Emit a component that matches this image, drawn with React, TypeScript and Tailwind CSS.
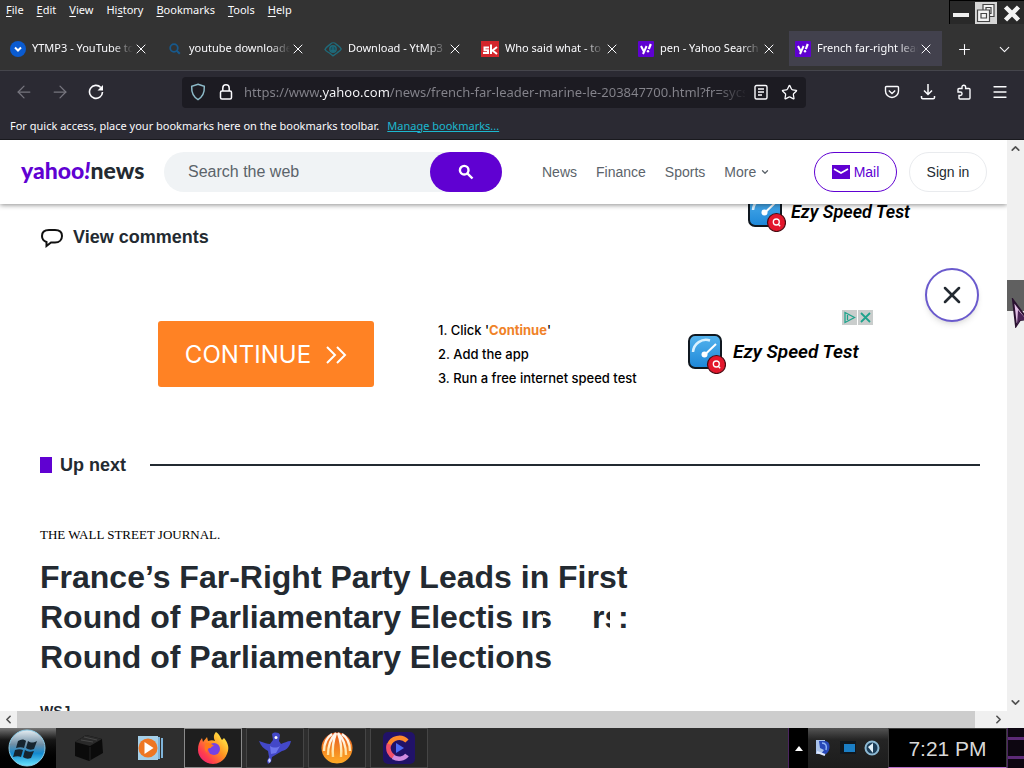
import React from "react";
import {
  ArrowLeft,
  ArrowRight,
  ChevronDown,
  ChevronLeft,
  ChevronRight,
  ChevronUp,
  Menu,
  Plus,
  Star,
  X,
} from "lucide-react";

const menus = [
  { before: "", key: "F", after: "ile" },
  { before: "", key: "E", after: "dit" },
  { before: "", key: "V", after: "iew" },
  { before: "Hi", key: "s", after: "tory" },
  { before: "", key: "B", after: "ookmarks" },
  { before: "", key: "T", after: "ools" },
  { before: "", key: "H", after: "elp" },
];

const YtIcon = () => (
  <svg viewBox="0 0 16 16" className="size-4 shrink-0">
    <circle cx="8" cy="8" r="8" fill="#0a5bd0" />
    <path d="M5 6.5l3 3 3-3" fill="none" stroke="#fff" strokeWidth="2" />
  </svg>
);

const GlassIcon = () => (
  <svg viewBox="0 0 16 16" className="size-4 shrink-0">
    <circle cx="7" cy="7" r="3.8" fill="none" stroke="#17598c" strokeWidth="1.8" />
    <path d="M9.8 9.8l3 3" stroke="#17598c" strokeWidth="2" />
  </svg>
);

const CloudIcon = () => (
  <svg viewBox="0 0 18 16" className="h-4 w-[18px] shrink-0" fill="none" stroke="#1f6a7a" strokeWidth="1.4">
    <path d="M1 8.500C3 5 5.500 4 6.500 3c1.500-1.500 4-1.500 5.500 0 1.500 1.500 4 2.500 5.200 5-1 2-2.700 2.500-4.200 4l-4 2.800L5.500 12C4 11 2 10.500 1 8.500z" />
    <circle cx="9" cy="8" r="3.200" fill="#1a4f5c" />
    <path d="M9 5.500v5M7.200 9L9 10.800 10.800 9" />
  </svg>
);

const SkIcon = () => (
  <svg viewBox="0 0 18 16" className="h-4 w-[18px] shrink-0">
    <rect width="18" height="16" fill="#d3262b" />
    <path
      d="M8 6.500H3.500v2.800H7V12H2M10 3.500V13M16 6l-4.500 3.500L16 13"
      fill="none"
      stroke="#fff"
      strokeWidth="2"
    />
  </svg>
);

const YahooIcon = () => (
  <svg viewBox="0 0 16 16" className="size-4 shrink-0">
    <rect width="16" height="16" rx="1" fill="#5f01d1" />
    <path d="M3 5l2.600 5M8.600 5L5 13" stroke="#fff" strokeWidth="2" fill="none" />
    <path d="M12.800 3l-2 5.200" stroke="#fff" strokeWidth="2.200" />
    <circle cx="10" cy="10.200" r="1.200" fill="#fff" />
  </svg>
);

const tabs = [
  { title: "YTMP3 - YouTube to", icon: YtIcon },
  { title: "youtube downloader", icon: GlassIcon },
  { title: "Download - YtMp3", icon: CloudIcon },
  { title: "Who said what - to wh", icon: SkIcon },
  { title: "pen - Yahoo Search", icon: YahooIcon },
  { title: "French far-right lead", icon: YahooIcon, active: true },
];

const Tab: React.FC<{
  title: string;
  icon: React.ElementType;
  active?: boolean;
}> = ({ title, icon: Icon, active }) => (
  <div
    className={`flex h-[35px] min-w-0 flex-1 items-center pr-2 pl-[6px] ${
      active ? "bg-[#42414d]" : ""
    }`}
  >
    <Icon />
    <span className="ml-[6px] min-w-0 flex-1 overflow-hidden mask-r-from-80% text-[11px] whitespace-nowrap">
      {title}
    </span>
    <button aria-label={`Close ${title}`} className="shrink-0">
      <X size={16} strokeWidth={1.5} />
    </button>
  </div>
);

const ToolButton: React.FC<{
  label: string;
  children: React.ReactNode;
}> = ({ label, children }) => (
  <button
    aria-label={label}
    className="flex h-8 w-9 shrink-0 items-center justify-center"
  >
    {children}
  </button>
);

const BrowserChrome = () => (
  <header className="shrink-0 bg-[#333333] font-['Noto_Sans',sans-serif] text-[#fbfbfe]">
    <div className="flex h-7 items-start justify-between">
      <nav className="flex gap-[13px] pl-[6px]">
        {menus.map((m) => (
          <button key={m.key + m.after} className="text-[11px] leading-5">
            {m.before}
            <u className="underline-offset-2">{m.key}</u>
            {m.after}
          </button>
        ))}
      </nav>
      <div className="flex h-6 w-[75px] items-center justify-between border-t border-l border-black bg-[#292929] px-[3px]">
        <button aria-label="Minimize">
          <svg viewBox="0 0 16 22" className="h-[22px] w-4">
            <path d="M0 13h16" stroke="#f0f0f0" strokeWidth="4" />
          </svg>
        </button>
        <button aria-label="Restore" className="bg-[#d5d5d5]">
          <svg viewBox="0 0 22 22" className="size-[22px]" fill="#f2f2f2" stroke="#444" strokeWidth="1.200">
            <path d="M8 2.500h11v12H8z" />
            <path d="M11 5.500h5v6h-5z" />
            <path d="M2.500 8h12v11.500h-12z" />
            <path d="M6 11.500h5.500V16H6z" />
          </svg>
        </button>
        <button aria-label="Close window">
          <svg viewBox="0 0 18 18" className="size-[18px]">
            <path d="M2.500 3l13 13M15.500 3l-13 13" stroke="#f4f4f4" strokeWidth="4.500" />
          </svg>
        </button>
      </div>
    </div>

    <div className="flex h-[43px] items-start border-b border-[#45454c] pt-[3px] pl-1">
      <div className="flex min-w-0 flex-1 gap-1">
        {tabs.map((tab) => (
          <Tab key={tab.title} {...tab} />
        ))}
      </div>
      <div className="flex gap-1 pt-[2px] pr-[2px] pl-1">
        <ToolButton label="New tab">
          <Plus size={17} strokeWidth={1.5} />
        </ToolButton>
        <ToolButton label="List all tabs">
          <ChevronDown size={17} strokeWidth={1.5} />
        </ToolButton>
      </div>
    </div>

    <div className="flex h-[42px] items-center bg-[#2b2a33] px-[6px]">
      <div className="flex text-[#77767f]">
        <ToolButton label="Back">
          <ArrowLeft size={20} strokeWidth={1.5} />
        </ToolButton>
        <ToolButton label="Forward">
          <ArrowRight size={20} strokeWidth={1.5} />
        </ToolButton>
      </div>
      <ToolButton label="Reload">
        <svg viewBox="0 0 16 16" className="size-4" fill="none" stroke="#fbfbfe" strokeWidth="1.600">
          <path d="M12.800 3.500A6.500 6.500 0 1 0 14.500 8" />
          <path d="M15 1v5.500H9.500z" fill="#fbfbfe" stroke="none" />
        </svg>
      </ToolButton>
      <div className="mx-[68px] flex h-[31px] min-w-0 flex-1 items-center rounded bg-[#1c1b22] px-2">
        <svg viewBox="0 0 16 18" className="h-[18px] w-4 shrink-0" fill="none" stroke="#8dbbc9" strokeWidth="1.500">
          <path d="M8 1.200l6.300 2.200c.3 5.800-1.500 10.400-6.300 13.200C3.200 13.800 1.400 9.200 1.700 3.400z" />
        </svg>
        <svg viewBox="0 0 14 18" className="ml-[13px] h-[18px] w-[14px] shrink-0" fill="none" stroke="#fbfbfe" strokeWidth="1.500">
          <rect x="1.500" y="8" width="11" height="8" rx="1.500" />
          <path d="M3.800 8V5a3.200 3.200 0 0 1 6.400 0v3" />
        </svg>
        <input
          aria-label="Address"
          readOnly
          value="https://www.yahoo.com/news/french-far-leader-marine-le-203847700.html?fr=sycsrp_catchall"
          className="ml-[11px] h-6 min-w-0 flex-1 bg-[linear-gradient(90deg,#85848c_0_76px,#fbfbfe_76px_145px,#85848c_145px_470px,transparent_504px)] bg-clip-text text-[13px] text-transparent outline-none"
        />
        <div className="flex gap-3 pl-2">
          <button aria-label="Reader view">
            <svg viewBox="0 0 16 16" className="size-4" fill="none" stroke="#fbfbfe" strokeWidth="1.400">
              <rect x="2" y="1.500" width="12" height="13.500" rx="1.500" />
              <path d="M5 5h6M5 8h6M5 11h4" />
            </svg>
          </button>
          <button aria-label="Bookmark this page">
            <Star size={17} strokeWidth={1.8} />
          </button>
        </div>
      </div>
      <ToolButton label="Save to Pocket">
        <svg viewBox="0 0 16 16" className="size-4" fill="none" stroke="#fbfbfe" strokeWidth="1.400">
          <path d="M2.500 2.500h11c.7 0 1 .4 1 1V7a6.500 6.500 0 0 1-13 0V3.500c0-.6.3-1 1-1z" />
          <path d="M4.800 6.500L8 9.500l3.200-3" />
        </svg>
      </ToolButton>
      <ToolButton label="Downloads">
        <svg viewBox="0 0 16 16" className="size-4" fill="none" stroke="#fbfbfe" strokeWidth="1.500">
          <path d="M8 0v10.500M4 6.500l4 4 4-4M1.500 12v1.500c0 .8.5 1.200 1.200 1.200h10.600c.7 0 1.200-.4 1.200-1.200V12" />
        </svg>
      </ToolButton>
      <ToolButton label="Extensions">
        <svg viewBox="0 0 16 16" className="size-4" fill="none" stroke="#fbfbfe" strokeWidth="1.400">
          <path d="M6 4.500V3a1.800 1.800 0 0 1 3.600 0v1.500H13c.6 0 1 .4 1 1V14c0 .6-.4 1-1 1H4c-.6 0-1-.4-1-1v-2.500h1.300a1.700 1.700 0 0 0 0-3.500H2V5.500c0-.6.400-1 1-1z" />
        </svg>
      </ToolButton>
      <ToolButton label="Open menu">
        <Menu size={18} strokeWidth={1.700} />
      </ToolButton>
    </div>

    <div className="flex h-[27px] items-center gap-2 border-b border-[#19191e] bg-[#2b2a33] px-[10px] text-[11px]">
      <span>
        For quick access, place your bookmarks here on the bookmarks toolbar.
      </span>
      <a href="#bookmarks" className="text-[#1cb8cf] underline">
        Manage bookmarks...
      </a>
    </div>
  </header>
);

const SiteHeader = () => (
  <div className="relative z-10 flex h-16 items-center bg-white pr-5 pl-[21px] text-sm text-[#5b636a] shadow-[0_1px_5px_rgba(0,0,0,0.45)]">
    <a
      href="#home"
      className="w-[143px] pb-1 font-['Lato',sans-serif] text-[23px] leading-8 font-black whitespace-nowrap text-[#232a31]"
    >
      <span className="text-[#6001d2]">
        yahoo<i>!</i>
      </span>
      news
    </a>
    <form className="flex h-10 w-[338px] rounded-full bg-[#f0f3f5]">
      <input
        aria-label="Search the web"
        placeholder="Search the web"
        className="min-w-0 flex-1 pl-6 text-base outline-none placeholder:text-[#5b636a]"
      />
      <button
        type="button"
        aria-label="Search"
        className="flex w-[72px] items-center justify-center rounded-full bg-[#6001d2]"
      >
        <svg viewBox="0 0 16 16" className="size-4" fill="none" stroke="#fff" strokeWidth="2.400">
          <circle cx="6.200" cy="6.200" r="4.300" />
          <path d="M9.300 9.300l5.200 5.200" />
        </svg>
      </button>
    </form>
    <nav className="ml-10 flex flex-1 gap-[19px]">
      <a href="#news">News</a>
      <a href="#finance">Finance</a>
      <a href="#sports">Sports</a>
      <a href="#more" className="flex items-center gap-1">
        More
        <ChevronDown size={10} strokeWidth={3} />
      </a>
    </nav>
    <button className="flex h-10 w-[83px] items-center justify-center gap-1 rounded-full border border-[#6001d2] text-[#6001d2]">
      <svg viewBox="0 0 18 14" className="h-[14px] w-[18px]">
        <rect width="18" height="14" fill="#6001d2" />
        <path d="M2 4l7 4 7-4" fill="none" stroke="#fff" strokeWidth="1.800" />
      </svg>
      Mail
    </button>
    <button className="ml-3 h-10 w-[78px] rounded-full border border-[#e9ebee] text-[#232a31]">
      Sign in
    </button>
  </div>
);

const SpeedIcon = () => (
  <svg viewBox="0 0 38 40" className="h-10 w-[38px] shrink-0">
    <defs>
      <linearGradient id="dial" x1="0" y1="0" x2="0" y2="1">
        <stop offset="0" stopColor="#55b4ee" />
        <stop offset="1" stopColor="#1d87d8" />
      </linearGradient>
    </defs>
    <rect x="1" y="1" width="32" height="33" rx="6" fill="url(#dial)" stroke="#101820" strokeWidth="2" />
    <path d="M5 18A13 13 0 0 1 22 6.500" fill="none" stroke="#d9f1ff" strokeWidth="2.500" />
    <path d="M17 20.500L28 10" stroke="#fff" strokeWidth="2" />
    <circle cx="16.500" cy="20.500" r="3" fill="#fff" />
    <circle cx="28.500" cy="30.500" r="9" fill="#e3172c" stroke="#4a0d14" strokeWidth="1.200" />
    <circle cx="28.300" cy="30" r="3" fill="none" stroke="#fff" strokeWidth="1.300" />
    <path d="M30 32l2.200 2.200" stroke="#fff" strokeWidth="1.300" />
  </svg>
);

const WebPage = () => (
  <main className="relative min-w-0 flex-1 overflow-hidden bg-white font-['Liberation_Sans',Arial,sans-serif] text-[#232a31]">
    <SiteHeader />
    <div className="pr-[27px] pl-10">
      <div className="flex items-start justify-between">
        <a href="#comments" className="mt-5 flex items-center gap-[9px] text-lg leading-[26px] font-bold">
          <svg viewBox="0 0 24 22" className="h-[22px] w-6" fill="none" stroke="#111" strokeWidth="2">
            <path d="M9 4h6c4.500 0 7 2.500 7 6s-2.500 6.500-7 6.500h-4L6.500 20v-4C3.500 15 2 13 2 10c0-3.500 2.500-6 7-6z" />
          </svg>
          View comments
        </a>
        <div className="-mt-3 mr-[70px] flex gap-[5px] font-['Roboto',sans-serif] text-lg leading-10 font-semibold text-black italic">
          <SpeedIcon />
          Ezy Speed Test
        </div>
      </div>

      <section className="mt-[60px] ml-[118px] flex items-start">
        <button className="mt-[11px] flex h-[66px] w-[216px] items-center justify-center gap-[14px] rounded-[3px] bg-[#ff8224] pt-[2px] font-['Inter',sans-serif] text-2xl text-white">
          CONTINUE
          <svg viewBox="0 0 22 18" className="h-[18px] w-[22px]" fill="none" stroke="#fff" strokeWidth="2">
            <path d="M2 1l8 8-8 8M12 1l8 8-8 8" />
          </svg>
        </button>
        <ol className="mt-2 ml-16 w-[250px] font-['Inter',sans-serif] text-[13px] leading-6 font-medium text-black">
          <li>
            1. Click '<b className="font-bold text-[#f08228]">Continue</b>'
          </li>
          <li>2. Add the app</li>
          <li>3. Run a free internet speed test</li>
        </ol>
        <div className="w-[185px]">
          <div className="flex justify-end gap-px">
            <button aria-label="Ad choices" className="bg-[#c9cdcc]">
              <svg viewBox="0 0 15 15" className="size-[15px]" fill="none" stroke="#1fa38c" strokeWidth="1.300">
                <path d="M3 2.500l9.500 5-9.500 5zM5.500 5v5" />
              </svg>
            </button>
            <button aria-label="Hide ad" className="bg-[#c9cdcc]">
              <svg viewBox="0 0 15 15" className="size-[15px]" stroke="#1fa38c" strokeWidth="1.800">
                <path d="M3 3l9 9M12 3l-9 9" />
              </svg>
            </button>
          </div>
          <div className="mt-[9px] flex gap-[7px] font-['Roboto',sans-serif] text-[19px] leading-9 font-semibold whitespace-nowrap text-black italic">
            <SpeedIcon />
            Ezy Speed Test
          </div>
        </div>
      </section>

      <div className="mt-[61px] flex items-center">
        <span className="h-4 w-3 bg-[#6001d2]" />
        <h2 className="ml-2 text-lg leading-7 font-bold">Up next</h2>
        <hr className="ml-6 flex-1 border-t-2 border-[#232a31]" />
      </div>

      <div className="mt-11 font-['Liberation_Serif',serif] text-[13px] leading-6 text-black">
        THE WALL STREET JOURNAL.
      </div>
      <div className="mt-[10px] text-[32px] leading-10 font-bold whitespace-nowrap">
        <h1>France’s Far-Right Party Leads in First</h1>
        {/* half-repainted line: only slices of the old text are left */}
        <div className="flex items-end">
          <span>Round of Parliamentary Electis</span>
          <span className="mb-2 ml-2 flex h-5 w-[22px] items-end overflow-hidden">
            <span className="-mb-2">in</span>
          </span>
          <span className="mb-2 flex h-5 w-[9px] items-end justify-end overflow-hidden">
            <span className="-mb-2">s</span>
          </span>
          <span className="mb-2 ml-10 flex h-5 w-[18px] items-end overflow-hidden">
            <span className="-mb-2">rs</span>
          </span>
          <span className="mb-2 ml-2 flex h-5 items-end overflow-hidden">
            <span className="-mb-2">:</span>
          </span>
        </div>
        <div>Round of Parliamentary Elections</div>
      </div>
      <div className="mt-6 text-sm font-bold">WSJ</div>
    </div>

    <button
      aria-label="Close"
      className="absolute top-32 right-7 flex size-[54px] items-center justify-center rounded-full border-2 border-[#6a5acd] bg-white shadow-md"
    >
      <X size={28} strokeWidth={2.200} />
    </button>
  </main>
);

const FirefoxIcon = () => (
  <svg viewBox="0 0 34 34" className="size-[34px]">
    <defs>
      <linearGradient id="fox" x1="1" y1="0" x2="0" y2="1">
        <stop offset="0.1" stopColor="#fff04a" />
        <stop offset="0.45" stopColor="#ff9320" />
        <stop offset="0.75" stopColor="#ff3b50" />
        <stop offset="1" stopColor="#e01a88" />
      </linearGradient>
    </defs>
    <path
      d="M20 1c4 3 4 5 6 8l2-2c4 5 5 9 4 13-2 8-8 13-15 13S2 27 2 19c0-5 1-8 4-12l1 4c1-2 3-3 4-5l1 4c3-1 5-1 7 0-2-4-1-7 1-9z"
      fill="url(#fox)"
    />
    <circle cx="18" cy="18" r="6" fill="#7542e5" />
    <path d="M10 12c4 0 6 1 8 3-2 0-3 1-3 2-3 0-5 2-4 5-3-3-3-7-1-10z" fill="#ff7a1a" />
  </svg>
);

const taskItems = [
  {
    label: "Files",
    framed: false,
    icon: (
      <svg viewBox="0 0 32 30" className="h-[30px] w-8">
        <path d="M2 9L13 2l16 4 1 14-14 8-14-5z" fill="#0b0b0b" />
        <path d="M2 9l11-7 16 4-12 7z" fill="#292929" />
        <path d="M8 7l12 2M11 4l13 3" fill="none" stroke="#474747" />
        <path d="M17 14v13" stroke="#242424" />
      </svg>
    ),
  },
  {
    label: "Media player",
    framed: false,
    icon: (
      <svg viewBox="0 0 28 28" className="size-7">
        <path d="M20 3h3v22h-3zM24 4h2v20h-2z" fill="#7fb4da" />
        <rect x="1" y="2" width="20" height="24" fill="#a5cfe8" />
        <circle cx="11" cy="14" r="9.500" fill="#ee7623" />
        <path d="M7.500 8l9 6-9 6z" fill="#fff" />
      </svg>
    ),
  },
  { label: "Firefox", framed: true, icon: <FirefoxIcon /> },
  {
    label: "Bird",
    framed: true,
    icon: (
      <svg viewBox="0 0 34 34" className="size-[34px]">
        <path
          d="M14 3c2-2 7-2 8 1l-1 6 2 3c3-1 6-3 10-3-1 5-4 9-9 10l-5 3-5 3-1 5-3 2-1-3 2-4-1-6c-4-2-7-5-9-10 4 1 8 3 11 3l3-4z"
          fill="#4348c8"
        />
        <path d="M12 15c3 2 7 2 10 0l-4 7-5 1z" fill="#6d76ee" />
        <circle cx="18" cy="6.500" r="1.500" fill="#fff" />
        <path d="M10 29l2-2 1 3-2 2z" fill="#cfd3ff" />
      </svg>
    ),
  },
  {
    label: "Shell",
    framed: true,
    icon: (
      <svg viewBox="0 0 32 34" className="h-[34px] w-8">
        <defs>
          <linearGradient id="shell" x1="0" y1="0" x2="0" y2="1">
            <stop offset="0" stopColor="#e55a20" />
            <stop offset="1" stopColor="#ffab25" />
          </linearGradient>
          <linearGradient id="ribs" x1="0" y1="0" x2="0" y2="1">
            <stop offset="0.3" stopColor="#fff6ea" />
            <stop offset="1" stopColor="#ffdc8a" />
          </linearGradient>
        </defs>
        <circle cx="16" cy="17" r="15.500" fill="url(#shell)" />
        <g fill="none" stroke="url(#ribs)" strokeWidth="2.400">
          <path d="M15 2C9 8 7 15 7 24M15 2c-3 8-4 14-3 24M17 2c3 8 4 14 3 24M17 2c6 6 8 13 8 22M11 3C5 7 3 13 3 20M21 3c6 4 8 10 8 17" />
        </g>
      </svg>
    ),
  },
  {
    label: "Recorder",
    framed: true,
    icon: (
      <svg viewBox="0 0 32 32" className="size-8">
        <rect width="32" height="32" rx="5" fill="#211268" />
        <path d="M24 9a11 11 0 0 0-18 4" fill="none" stroke="#ff8a2a" strokeWidth="4.500" />
        <path d="M6 12c-2 6 1 11 5 13" fill="none" stroke="#f2506a" strokeWidth="4.500" />
        <path d="M10 25c5 3 11 2 14-2" fill="none" stroke="#d08be0" strokeWidth="4.500" />
        <path d="M13 11l8 5-8 5z" fill="#4b6bf5" />
      </svg>
    ),
  },
];

const Taskbar = () => (
  <footer className="flex h-10 shrink-0 bg-[#2e2e2e]">
    <button
      aria-label="Start"
      className="w-14 bg-linear-to-b from-[#777] via-[#161616] via-30% to-black"
    >
      <svg viewBox="0 0 56 40" className="h-10 w-14">
        <defs>
          <linearGradient id="orb" x1="0" y1="0" x2="0" y2="1">
            <stop offset="0" stopColor="#e6eef3" />
            <stop offset="0.4" stopColor="#6f8ea5" />
            <stop offset="0.65" stopColor="#1389cf" />
            <stop offset="1" stopColor="#6be6ff" />
          </linearGradient>
        </defs>
        <circle cx="27" cy="20" r="18" fill="url(#orb)" stroke="#8ccbe6" />
        <path
          d="M18 13c3-2 6-2 8 0l-2 7c-2-1-5-1-8 0zM28 13c3 2 5 2 9 0l-3 8c-3 1-5 1-8-1zM15 22c3-1 6-1 8 0l-2 7c-2-1-5-1-8 0zM25 22c3 2 5 2 9 1l-3 7c-3 1-5 1-8-1z"
          fill="#16242f"
        />
      </svg>
    </button>
    <div className="flex flex-1 gap-1 pl-1">
      {taskItems.map((item) => (
        <button
          key={item.label}
          aria-label={item.label}
          className={`flex w-[58px] items-center justify-center border ${
            item.label === "Firefox"
              ? "border-[#8a8a8a] bg-[#1e1e1e]"
              : item.framed
                ? "border-[#454545] bg-[#262626]"
                : "border-transparent"
          }`}
        >
          {item.icon}
        </button>
      ))}
    </div>
    <div className="flex w-[100px] items-center bg-linear-to-b from-[#555] via-[#242424] via-30% to-[#1c1c1c]">
      <button
        aria-label="Show hidden icons"
        className="flex h-10 w-5 items-center justify-center border-l border-[#4b2560] bg-black"
      >
        <svg viewBox="0 0 8 5" className="h-[5px] w-2">
          <path d="M4 0l4 5H0z" fill="#fff" />
        </svg>
      </button>
      <div className="flex flex-1 items-center justify-between pr-2 pl-[7px]">
        <svg viewBox="0 0 16 18" className="h-[18px] w-4">
          <rect width="9" height="14" x="1" y="1" fill="#a9c2ea" />
          <path d="M4 2h6c6 0 6 10 1 13H6l3-4-4-2z" fill="#2748b8" />
          <path d="M7 4c4 0 5 3 4 7" fill="none" stroke="#8db2f5" strokeWidth="1.500" />
          <path d="M2 13l8 3" stroke="#dfe9ff" strokeWidth="2" />
        </svg>
        <svg viewBox="0 0 16 16" className="size-4">
          <rect x="0" y="1" width="16" height="13" fill="#11181f" />
          <rect x="4" y="4" width="11" height="8" fill="#1b7fc6" />
        </svg>
        <svg viewBox="0 0 16 16" className="size-4">
          <circle cx="8" cy="8" r="6.500" fill="#1c3d57" stroke="#8db9d3" strokeWidth="2" />
          <path d="M4 7l5-4v10z" fill="#e3f2fa" />
        </svg>
      </div>
    </div>
    <div className="flex w-[119px] items-center justify-center border border-b-[#b36fc9] border-[#3a3a3a] bg-black pt-[2px] font-['Liberation_Sans',Arial,sans-serif] text-[21px] whitespace-nowrap text-[#d8d8d8]">
      7:21 PM
    </div>
    <div className="flex w-[17px] flex-col justify-between border-l border-[#4b2560] bg-[#0d0611] py-[9px]">
      <span className="h-[3px] bg-[#5d2a78]" />
      <span className="h-[3px] bg-[#5d2a78]" />
    </div>
  </footer>
);

export default function App() {
  return (
    <div className="relative flex h-screen w-full flex-col overflow-hidden">
      <BrowserChrome />
      <div className="flex min-h-0 flex-1">
        <WebPage />
        <div className="flex w-[17px] shrink-0 flex-col justify-between bg-[#f0f0f0] text-[#505050]">
          <button aria-label="Scroll up" className="flex h-[17px] items-center justify-center">
            <ChevronUp size={13} strokeWidth={3} />
          </button>
          <div className="flex-1 pt-[123px]">
            <div className="h-[31px] bg-[#606060]" />
          </div>
          <button aria-label="Scroll down" className="flex h-[17px] items-center justify-center">
            <ChevronDown size={13} strokeWidth={3} />
          </button>
        </div>
      </div>
      <div className="flex h-[17px] shrink-0 bg-[#f0f0f0] pr-[17px] text-[#505050]">
        <button aria-label="Scroll left" className="flex w-[17px] items-center justify-center">
          <ChevronLeft size={13} strokeWidth={3} />
        </button>
        <div className="flex-1 pr-[15px]">
          <div className="h-full bg-[#cdcdcd]" />
        </div>
        <button aria-label="Scroll right" className="flex w-[17px] items-center justify-center">
          <ChevronRight size={13} strokeWidth={3} />
        </button>
      </div>
      <Taskbar />
      {/* mouse pointer */}
      <svg viewBox="0 0 16 30" className="absolute top-[298px] right-0 z-20 h-[30px] w-4">
        <path d="M5 2l14 19-7 1-4 6z" fill="#e3c0e6" stroke="#2a1230" strokeWidth="2" />
        <path d="M10 12l9 10-7 0-3 5z" fill="#4a2456" />
      </svg>
    </div>
  );
}
